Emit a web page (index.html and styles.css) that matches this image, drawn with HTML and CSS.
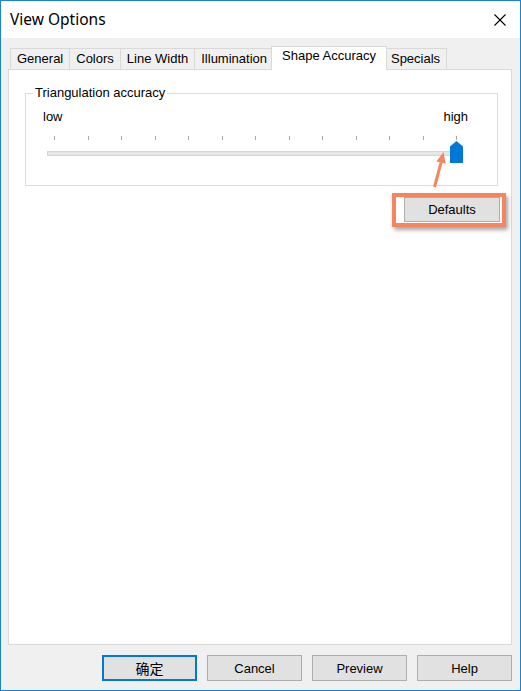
FILE: index.html
```html
<!DOCTYPE html>
<html>
<head>
<meta charset="utf-8">
<link rel="stylesheet" href="styles.css">
</head>
<body>
<div class="window">
  <div class="titlebar">
    <span class="title">View Options</span>
    <svg class="close" width="12" height="12" viewBox="0 0 12 12"><path d="M0.5 0.5 L11.5 11.5 M11.5 0.5 L0.5 11.5" stroke="#000" stroke-width="1.1" fill="none"/></svg>
  </div>
  <div class="content">
    <div class="tabs">
      <div class="tab">General</div>
      <div class="tab">Colors</div>
      <div class="tab">Line Width</div>
      <div class="tab">Illumination</div>
      <div class="tab active">Shape Accuracy</div>
      <div class="tab">Specials</div>
    </div>
    <div class="panel">
      <div class="group">
        <div class="legend">Triangulation accuracy</div>
        <div class="labels"><span>low</span><span>high</span></div>
        <div class="ticks">
          <i></i><i></i><i></i><i></i><i></i><i></i><i></i><i></i><i></i><i></i><i></i><i></i><i></i>
        </div>
        <div class="track">
          <svg class="thumb" width="13" height="22" viewBox="0 0 13 22"><polygon points="0,5.5 6.5,0 13,5.5 13,22 0,22" fill="#0078d7"/></svg>
        </div>
      </div>
      <div class="defaults-row">
        <button class="btn defaults">Defaults</button>
      </div>
      <div class="highlight"></div>
      <svg class="arrow" width="20" height="40" viewBox="0 0 20 40">
        <line x1="4.5" y1="37" x2="11" y2="12.7" stroke="#f38660" stroke-width="3"/>
        <polygon points="13.5,2 15.6,13.8 6.4,11.4" fill="#f38660"/>
      </svg>
    </div>
    <div class="buttons">
      <button class="btn primary">确定</button>
      <button class="btn">Cancel</button>
      <button class="btn">Preview</button>
      <button class="btn">Help</button>
    </div>
  </div>
</div>
</body>
</html>
```
FILE: styles.css
```css
html, body {
  margin: 0;
  padding: 0;
}
body {
  width: 521px;
  height: 691px;
  font-family: "Liberation Sans", Arial, "Noto Sans CJK SC", sans-serif;
  font-size: 13px;
  color: #000;
}
.window {
  box-sizing: border-box;
  width: 521px;
  height: 691px;
  border: 1px solid #1883d7;
  background: #f0f0f0;
  display: flex;
  flex-direction: column;
}
.titlebar {
  height: 37px;
  flex: none;
  background: #fff;
  display: flex;
  align-items: center;
  justify-content: space-between;
  padding: 0 14px 0 9px;
}
.title {
  font-family: "Noto Sans", sans-serif;
  font-size: 15.5px;
  line-height: 20px;
  margin-top: -1px;
}
.close {
  display: block;
}
.content {
  flex: 1;
  display: flex;
  flex-direction: column;
  padding: 8px 8px 9px 7px;
}
.tabs {
  display: flex;
  align-items: flex-end;
  height: 23px;
  padding-left: 3px;
  flex: none;
}
.tab {
  box-sizing: border-box;
  height: 21px;
  line-height: 20px;
  padding: 0 6px;
  border: 1px solid #d9d9d9;
  border-bottom: none;
  margin-left: -1px;
  background: #f0f0f0;
  white-space: nowrap;
}
.tab.active {
  position: relative;
  z-index: 1;
  height: 24px;
  line-height: 18px;
  margin: 0 -2px -1px -3px;
  padding: 0 10px;
  background: #fff;
  border-color: #d9d9d9;
}
.panel {
  position: relative;
  flex: 1;
  background: #fff;
  border: 1px solid #d9d9d9;
  padding: 23px 0 0 16px;
}
.group {
  box-sizing: border-box;
  width: 473px;
  height: 93px;
  border: 1px solid #dcdcdc;
}
.legend {
  width: max-content;
  margin: -9px 0 0 7px;
  padding: 0 2px;
  background: #fff;
  line-height: 16px;
}
.labels {
  display: flex;
  justify-content: space-between;
  padding: 0 29px 0 17px;
  margin-top: 8px;
  line-height: 16px;
}
.ticks {
  display: flex;
  justify-content: space-between;
  margin: 11px 40px 0 28px;
  height: 4px;
}
.ticks i {
  width: 1px;
  height: 4px;
  background: #a8a8a8;
}
.track {
  position: relative;
  box-sizing: border-box;
  height: 5px;
  margin: 11px 35px 0 21px;
  background: #e7e7e7;
  border: 1px solid #d6d6d6;
}
.thumb {
  position: absolute;
  left: 402px;
  top: -11px;
  display: block;
}
.defaults-row {
  display: flex;
  justify-content: flex-end;
  margin-top: 11px;
  padding-right: 11px;
}
.btn {
  box-sizing: border-box;
  width: 95px;
  height: 26px;
  margin: 0;
  padding: 0;
  background: #e1e1e1;
  border: 1px solid #adadad;
  font-family: "Liberation Sans", Arial, "Noto Sans CJK SC", sans-serif;
  font-size: 13px;
  color: #000;
}
.btn.defaults {
  width: 96px;
  height: 25px;
}
.btn.primary {
  border: 2px solid #0078d7;
  font-family: "Noto Sans CJK SC", sans-serif;
  font-size: 14px;
}
.highlight {
  position: absolute;
  left: 383px;
  top: 123px;
  box-sizing: border-box;
  width: 114px;
  height: 34px;
  border: 4px solid #f38660;
  box-shadow: 2px 3px 4px rgba(0, 0, 0, 0.35);
}
.arrow {
  position: absolute;
  left: 421px;
  top: 80px;
  display: block;
}
.buttons {
  display: flex;
  justify-content: flex-end;
  gap: 10px;
  margin-top: 10px;
  flex: none;
}
```
